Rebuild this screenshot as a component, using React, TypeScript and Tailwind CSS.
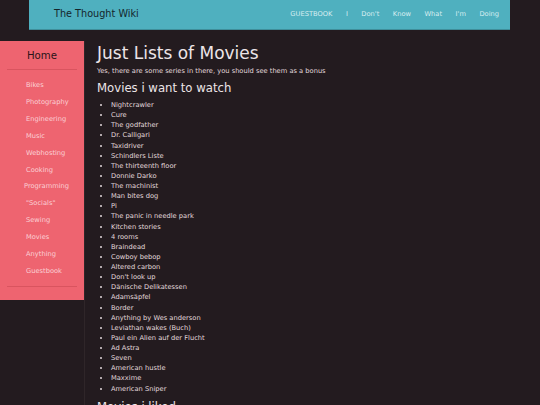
import React from 'react';

const NAV = ["GUESTBOOK", "I", "Don't", "Know", "What", "I'm", "Doing"];

const SIDE = [
  "Bikes",
  "Photography",
  "Engineering",
  "Music",
  "Webhosting",
  "Cooking",
  "Programming",
  "\"Socials\"",
  "Sewing",
  "Movies",
  "Anything",
  "Guestbook",
];

const WANT = [
  "Nightcrawler",
  "Cure",
  "The godfather",
  "Dr. Calligari",
  "Taxidriver",
  "Schindlers Liste",
  "The thirteenth floor",
  "Donnie Darko",
  "The machinist",
  "Man bites dog",
  "Pi",
  "The panic in needle park",
  "Kitchen stories",
  "4 rooms",
  "Braindead",
  "Cowboy bebop",
  "Altered carbon",
  "Don't look up",
  "Dänische Delikatessen",
  "Adamsäpfel",
  "Border",
  "Anything by Wes anderson",
  "Leviathan wakes (Buch)",
  "Paul ein Alien auf der Flucht",
  "Ad Astra",
  "Seven",
  "American hustle",
  "Maxxime",
  "American Sniper",
];

export default function App() {
  return (
    <div className="bg-[#231b1f] min-h-screen h-[405px] overflow-hidden text-[#e2d9dc] font-['DejaVu_Sans',sans-serif]">
      {/* header */}
      <header className="ml-[29px] mr-[30px] h-[30px] bg-[#4fb0bf] border-b border-[#3f8e9a] flex items-center justify-between pl-[25px] pr-[11px]">
        <span className="text-[9.7px] text-[#15252b]">The Thought Wiki</span>
        <nav className="flex gap-[13.5px] text-[6.7px] text-[#d9eef1]">
          {NAV.map((n) => (
            <span key={n}>{n}</span>
          ))}
        </nav>
      </header>

      <div className="flex">
        <aside className="w-[85px] shrink-0 border-r border-[#2f2629] min-h-[400px] mt-[11px]">
          <div className="w-[84px] h-[259px] bg-[#ee6470] pt-[8px]">
            <div className="text-center text-[10.2px] leading-[14px] text-[#2a1418]">Home</div>
            <div className="mx-[7px] mt-[6px] border-t border-[#d9545f]" />
            <ul className="mt-[7px] pl-[26px] text-[6.7px] leading-[16.9px] text-[#fbd0d5]">
              {SIDE.map((s) => (
                <li key={s} className={s === "Programming" ? "-ml-[2px]" : ""}>
                  {s}
                </li>
              ))}
            </ul>
            <div className="mx-[7px] mt-[6px] border-t border-[#d9545f]" />
          </div>
        </aside>

        <main className="pl-[12px] pt-[13px]">
          <h1 className="text-[17px] leading-[20px] text-[#ece4e7]">Just Lists of Movies</h1>
          <p className="mt-[3px] text-[6.7px] leading-[10px]">
            Yes, there are some series in there, you should see them as a bonus
          </p>
          <h2 className="mt-[4px] text-[11.7px] leading-[16px] text-[#ece4e7]">Movies i want to watch</h2>
          <ul className="mt-[4px] list-disc pl-[14px] text-[6.7px] leading-[10.12px]">
            {WANT.map((m) => (
              <li key={m}>{m}</li>
            ))}
          </ul>
          <h2 className="mt-[5px] text-[11.7px] leading-[16px] text-[#ece4e7]">Movies i liked</h2>
        </main>
      </div>
    </div>
  );
}
